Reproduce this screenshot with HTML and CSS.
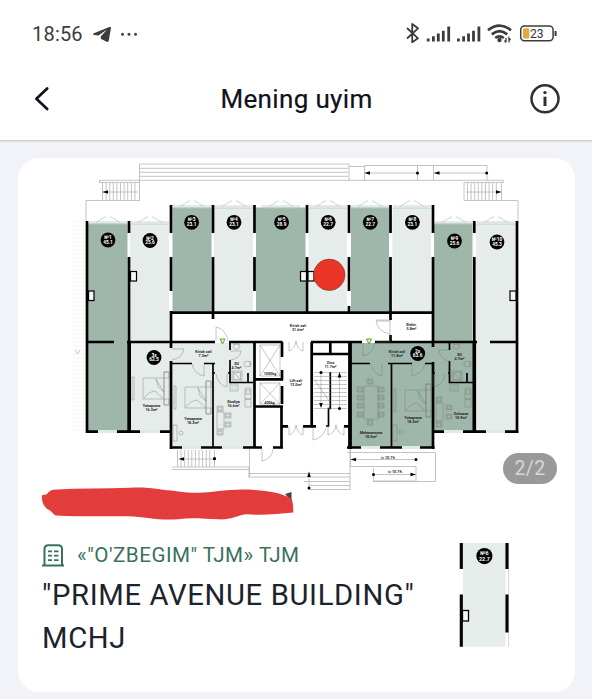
FILE: index.html
```html
<!DOCTYPE html>
<html lang="uz">
<head>
    <meta charset="UTF-8">
    <meta name="viewport" content="width=device-width, initial-scale=1.0">
    <title>Mening uyim</title>
    <link rel="stylesheet" href="styles.css">
</head>
<body>
    <header class="top">
        <div class="status-bar">
            <span class="time">18:56</span>
            <svg class="telegram" width="20" height="18" viewBox="92 25 20 18"><path d="M93.3 33.4Q92.6 34.5 94 35L98.4 35.5L107 29.6L100.8 36.6V38.8L106.6 41.8Q108.4 42.4 108.8 40.6L110.9 28.2Q111 26.4 109.3 27Z" fill="#3c3c3c"/></svg>
            <svg class="dots" width="18" height="6" viewBox="120 30 18 6" fill="#444"><circle cx="122.5" cy="33.2" r="1.5"/><circle cx="129" cy="33.2" r="1.5"/><circle cx="135.5" cy="33.2" r="1.5"/></svg>
            <!-- bluetooth, two sims, wifi, battery -->
            <svg class="system" width="156" height="28" viewBox="402 20 156 28">
                <path d="M407 28L418 38.3L412.2 42.2V24L418 28.3L407 38.5" fill="none" stroke="#3c3c3c" stroke-width="1.8" stroke-linejoin="round"/>
                <path id="sim" d="M428.2 38.5V41.5M433.4 36.3V41.5M438.3 33.5V41.5M443.3 30.8V41.5M448.7 26.5V41.5" stroke="#3c3c3c" stroke-width="2.8"/>
                <use href="#sim" x="30.2"/>
                <g fill="none" stroke="#3c3c3c" stroke-width="2.7">
                    <path d="M488 30.2Q499.5 21 511 30.2M491.8 34.4Q499.5 28 507.2 34.4M495.2 38Q499.5 34.7 503.8 38"/>
                </g>
                <circle cx="499.5" cy="40" r="2.2" fill="#3c3c3c"/>
                <path d="M506 38V42M504.5 40.5L506 42.5M509 42.5V38L510.5 40" fill="none" stroke="#3c3c3c" stroke-width="1.3"/>
                <rect x="520.7" y="26" width="32.4" height="14.8" rx="3.8" fill="#fff" stroke="#3c3c3c" stroke-width="1.5"/>
                <rect x="523" y="28.3" width="6.3" height="10.3" rx="1.4" fill="#e1a944"/>
                <path d="M555.6 31V36" stroke="#3c3c3c" stroke-width="2"/>
                <text x="530" y="38.3" class="charge">23</text>
            </svg>
        </div>
        <div class="nav">
            <svg class="back" width="20" height="28" viewBox="32 85 20 28"><path d="M47.2 88.5L36.4 98.8L47.2 109" fill="none" stroke="#0e121c" stroke-width="2.7" stroke-linecap="round" stroke-linejoin="round"/></svg>
            <h1>Mening uyim</h1>
            <svg class="info" width="32" height="32" viewBox="529 83 32 32"><circle cx="545" cy="98.8" r="13.5" fill="none" stroke="#303030" stroke-width="2.5"/><path d="M545 96.7V106" stroke="#303030" stroke-width="3"/><circle cx="545" cy="92.6" r="1.7" fill="#303030"/></svg>
        </div>
    </header>

    <main class="card">
        <div class="plan">
            <svg class="plan-svg" width="557" height="328" viewBox="18 158 557 328">
                <defs>
                    <path id="gable" d="M-12 0.5L-3 -5L-2 -5M12 0.5L3 -5L2 -5M-19 0H19M-19 2H19"/>
                    <g id="bed"><path d="M0 0H21V21H0ZM21 -6H26V27H21ZM21 -6H26V0H21ZM21 21H26V27H21ZM13 1L21 14M13 1L15 9L21 14M1 20Q5 14 12 13Q15 16 20 20M-11 -1H-9V22H-11Z"/></g>
                    <g id="chair"><path d="M0 0H6V5H0ZM1.2 1.2H4.8V4H1.2Z"/></g>
                    <g id="kitchen"><path d="M0 0H8V7H0ZM15 4H21V15H15ZM16 6H20V10H16ZM15 15H21V23H15Z"/><path d="M1.5 2H3.5M4.5 2H6.5M1.5 5H3.5M4.5 5H6.5"/></g>
                    <g id="bath"><ellipse cx="6.5" cy="3.5" rx="3.2" ry="2.8"/><path d="M3 1H10M2 28H12V38H2ZM3.5 29.5H10.5V36.5H3.5ZM3.5 29.5L10.5 36.5"/><ellipse cx="17.5" cy="21" rx="3.8" ry="2.8"/><path d="M20 18V24"/></g>
                </defs>

                <!-- terrace and outside stairs -->
                <g class="outline">
                    <path d="M139.5 200.5V164H349V181M139.5 168.3H348M139.5 172.3H348M139.5 176.3H348M139.5 180.3H364.5"/>
                    <path d="M99.5 180.3H139.5M99.5 182.5H139.5M99.5 180V183M102.5 183V200M106.1 183V200M109.7 183V200M113.3 183V200M116.9 183V200M120.5 183V200M124.1 183V200M127.7 183V200M131.3 183V200M134.9 183V200M102 192H138M86 221V200.5H140"/>
                    <path d="M349 166.5H364.5M364.5 181V165.5H487V180M364.5 173H417M417.5 165V180M433.5 165V180M434 173H487M364.5 180.3H503.5V182.5H464V200.5H518V221M467.5 183V200M471.1 183V200M474.7 183V200M478.3 183V200M481.9 183V200M485.5 183V200M489.1 183V200M492.7 183V200M496.3 183V200M501.5 183V200M466 192H500"/>
                    <path d="M172 467H249V478M177.5 450V467M181 450V467M184.6 450V467M188.2 450V467M191.8 450V467M195.4 450V467M199 450V467M202.6 450V467M206.2 450V467M209.8 450V467M214.5 450V467M182 459H214M172 469.5H249"/>
                    <path d="M249.5 449V477H350M249.5 473.5H350M350 449V490M304 481.5H350M309 485.5H350M309 489.5H350M309 473V489"/>
                    <path d="M347 452.5H435.5V481.5H373.5V468M350 466.5H416V481M373.5 481H416M350 459.5H416M373.5 474.5H416M350.5 450V467"/>
                </g>
                <path class="hatch" d="M74 221V433M77 221V433M80 221V433M83 221V433"/>
                <path class="outline" d="M75 350L77.5 354L80 350"/>

                <!-- units -->
                <g class="sage">
                    <path d="M88 223.5H127.5V431H88ZM172.5 207.5H211.5V311.5H172.5ZM256 207.5H305.5V311.5H256ZM351 207.5H389V311.5H351ZM434 223.5H472.5V431H434ZM351 343H434V447H351ZM449 343H474V431H449ZM434 343H450V431H434Z"/>
                </g>
                <g class="pale">
                    <path d="M130 223.5H169V341H130ZM214 207.5H253V311.5H214ZM308.5 207.5H347V311.5H308.5ZM392.5 207.5H431V311.5H392.5ZM476 223.5H515.5V431H476ZM130 343H171V431H130ZM171 343H254V447H171Z"/>
                </g>
                <path d="M98 431.5H117M140 431.5H160M182 447.5H201M222 447.5H243M361 447.5H380M402 447.5H420M444 431.5H463M486 431.5H505" stroke="#dcebea" stroke-width="3"/>

                <g class="gable">
                    <use href="#gable" x="108" y="222"/><use href="#gable" x="150" y="222"/>
                    <use href="#gable" x="192" y="206"/><use href="#gable" x="234" y="206"/>
                    <use href="#gable" x="281" y="206"/><use href="#gable" x="328" y="206"/>
                    <use href="#gable" x="370" y="206"/><use href="#gable" x="412" y="206"/>
                    <use href="#gable" x="454" y="222"/><use href="#gable" x="496" y="222"/>
                </g>

                <!-- walls -->
                <g class="wall">
                    <path d="M87 221V433M129 221V233M129 257V433M171 205V233M171 257V291M171 311V348M171 361V449M213 205V233M213 257V319M254.5 205V233M254.5 257V291M307 205V233M307 257V312M349 205V233M349 257V291M349 306V312M390.5 205V233M390.5 257V320M390.5 335V342M433 205V233M433 257V347M433 362V449M474.3 221V233M474.3 257V433M517 221V433"/>
                    <path d="M170 312.7H433M87 342H114M127 342H215M229 342H282.5M311 342H362M375 342H477M490 342H518"/>
                    <path d="M86 431.7H98M117 431.7H140M160 431.7H171M170 447.5H182M201 447.5H222M243 447.5H262M273 447.5H283M347 447.5H361M380 447.5H402M420 447.5H434.5M433 431.7H444M463 431.7H486M505 431.7H518.3"/>
                    <path d="M254.5 342V448M282 342V357M282 370V380M282 386V404M255 379.3H283M255 406.5H283M281.5 406V448M281 426.3H288M303 426.3H316M311.7 342V426M312 354H349M330.3 342V354M344 426.3H350"/>
                    <path d="M350 342V449" stroke-width="3.8"/>
                    <path d="M129.2 342V432M474.3 342V432" stroke-width="3.6"/>
                </g>
                <g class="thin-wall">
                    <path d="M171 363.5H192M204 363.5H215M213 363V447M230 342V350M230 360V382.5H254M248 373V382M351 363.5H370M388 363.5H412M425 363.5H433M391.5 363V447M449.5 342V350M449.5 361V382.5H473M467 373V382M330.3 372V408.5H328.5V426H326"/>
                    <path d="M213 373H215M228 373H230M433 373H435M448 373H450"/>
                </g>
                <g class="shaft">
                    <rect x="88.5" y="291" width="5.5" height="9.5"/><rect x="130.5" y="271.5" width="6" height="9.5"/>
                    <rect x="300.5" y="271.5" width="6" height="9.5"/><rect x="308" y="271.5" width="6" height="9.5"/>
                    <rect x="510" y="291" width="6" height="9.5"/>
                </g>

                <!-- furniture -->
                <g class="furniture">
                    <use href="#bed" x="143" y="378"/><use href="#bed" x="185" y="387"/><use href="#bed" x="405" y="390"/>
                    <use href="#kitchen" x="230" y="384"/><use href="#kitchen" x="450" y="384"/>
                    <use href="#bath" x="230" y="343"/><use href="#bath" x="450" y="343"/>
                    <use href="#chair" x="217" y="406"/><use href="#chair" x="225" y="413"/><use href="#chair" x="225" y="422"/><use href="#chair" x="217" y="430"/>
                    <use href="#chair" x="436" y="397"/><use href="#chair" x="446" y="405"/><use href="#chair" x="446" y="414"/><use href="#chair" x="436" y="422"/>
                    <path d="M217 412H224V429H217ZM436 403H443V421H436ZM173 425H177V441H173Z"/><circle cx="181" cy="433" r="2"/>
                    <path d="M364 386H378V419H364ZM393 425H397V441H393Z"/><circle cx="401" cy="432" r="2"/>
                    <use href="#chair" x="367" y="379"/><use href="#chair" x="367" y="420"/>
                    <use href="#chair" x="357" y="387"/><use href="#chair" x="357" y="395"/><use href="#chair" x="357" y="403"/><use href="#chair" x="357" y="412"/>
                    <use href="#chair" x="378" y="387"/><use href="#chair" x="378" y="395"/><use href="#chair" x="378" y="403"/><use href="#chair" x="378" y="412"/>
                    <path d="M204 364V376Q194 374 192 364M412 364V376Q422 374 425 364M382 364V376Q373 374 371 364M172 349H184Q182 358 172 360M227 374V387Q218 385 216 374M230 351H241Q240 359 230 360M433 374V387M445 374Q444 385 434 387M449 350H439Q440 359 449 361"/>
                    <path d="M216 341V327Q226 329 228 341M363 343V356Q373 354 375 343M390 321H376Q378 332 390 334M262 449V461Q272 459 273 449M313 428V440Q323 438 326 428"/>
                    <path d="M289 342V351Q295 349 296 341Q297 349 303 351V342M289 426V435Q295 433 296 425Q297 433 303 435V426M328 426V435Q335 433 336 425Q337 433 344 435V426"/>
                    <path d="M260 345H280V376H260ZM260 345L280 376M280 345L260 376M260 383H280V404H260ZM260 383L280 404M280 383L260 404"/>
                    <path d="M314 372.5H347M314 376.5H347M314 380.5H347M314 384.5H347M314 388.5H347M314 392.5H347M314 396.5H347M314 400.5H347M314 404.5H347M314 408.5H347M314 379L329 401M321 373V406M339.5 374V408M376 320H390V342H376"/>
                </g>

                <!-- direction arrows -->
                <g class="arrows">
                    <path d="M102.5 192L108 190.2V193.8ZM364.5 173L370 171.2V174.8ZM434 173L439.5 171.2V174.8ZM501.5 192L496 190.2V193.8ZM178.5 459L184 457.2V460.8ZM350.5 459.5L356 457.7V461.3ZM416 474.5L410.5 472.7V476.3ZM309 471.5L307.2 477H310.8ZM321 408L319.2 403H322.8ZM339.5 372L337.7 377.5H341.3Z"/>
                    <circle cx="417.5" cy="173" r="1.5"/><circle cx="486.7" cy="173" r="1.5"/><circle cx="214.5" cy="458.7" r="1.6"/><circle cx="416" cy="459.5" r="1.5"/><circle cx="373.5" cy="474.5" r="1.5"/><circle cx="309" cy="488" r="1.5"/><circle cx="321" cy="372.5" r="1.5"/><circle cx="339.5" cy="408.5" r="1.5"/>
                </g>
                <path d="M220 339H225L222.5 344ZM366.5 339H371.5L369 344Z" fill="#eef5a0" stroke="#5fa43a" stroke-width="1"/>

                <!-- room names -->
                <g class="rooms">
                    <text x="298" y="326.5">Kirish zali</text><text x="298" y="330.8">31.6m²</text>
                    <text x="411.5" y="326">Elektr.</text><text x="411.5" y="330.3">5.8m²</text>
                    <text x="203.5" y="352.5">Kirish zali</text><text x="203.5" y="356.8">7.3m²</text>
                    <text x="397" y="352.5">Kirish zali</text><text x="397" y="356.8">11.8m²</text>
                    <text x="236.5" y="364.5">SU</text><text x="236.5" y="368.5">4.7m²</text>
                    <text x="459.5" y="356">SU</text><text x="459.5" y="360">4.7m²</text>
                    <text x="151.5" y="407">Yotoqxona</text><text x="151.5" y="411.3">16.3m²</text>
                    <text x="193" y="419.5">Yotoqxona</text><text x="193" y="423.8">18.2m²</text>
                    <text x="233.5" y="403">Studiya</text><text x="233.5" y="407.3">16.6m²</text>
                    <text x="296" y="382">Lift zali</text><text x="296" y="386.3">13.0m²</text>
                    <text x="330.5" y="364">Zina</text><text x="330.5" y="368.3">11.7m²</text>
                    <text x="270" y="375.3">1000kg</text><text x="269.5" y="404">400kg</text>
                    <text x="371" y="434">Mehmonxona</text><text x="371" y="438.3">18.0m²</text>
                    <text x="413" y="418.5">Yotoqxona</text><text x="413" y="422.8">18.2m²</text>
                    <text x="461" y="414.5">Oshxona</text><text x="461" y="418.8">10.9m²</text>
                    <text x="388" y="458.5">i= 10.1%</text><text x="395" y="473.3">i= 10.1%</text>
                </g>

                <!-- unit badges -->
                <g class="badges">
                    <circle cx="108" cy="240" r="7.4"/><text x="108" y="239">№1</text><text x="108" y="243.8">45.1</text>
                    <circle cx="150" cy="240.5" r="7.4"/><text x="150" y="239.5">№2</text><text x="150" y="244.3">25.6</text>
                    <circle cx="191.6" cy="222.3" r="7.4"/><text x="191.6" y="221.3">№3</text><text x="191.6" y="226.1">23.1</text>
                    <circle cx="234" cy="222.3" r="7.4"/><text x="234" y="221.3">№4</text><text x="234" y="226.1">23.1</text>
                    <circle cx="281.6" cy="222.3" r="7.4"/><text x="281.6" y="221.3">№5</text><text x="281.6" y="226.1">28.9</text>
                    <circle cx="328.2" cy="222.3" r="7.4"/><text x="328.2" y="221.3">№6</text><text x="328.2" y="226.1">22.7</text>
                    <circle cx="370.3" cy="222.3" r="7.4"/><text x="370.3" y="221.3">№7</text><text x="370.3" y="226.1">22.7</text>
                    <circle cx="412.4" cy="222.3" r="7.4"/><text x="412.4" y="221.3">№8</text><text x="412.4" y="226.1">23.1</text>
                    <circle cx="454.5" cy="241" r="7.4"/><text x="454.5" y="240">№9</text><text x="454.5" y="244.8">25.6</text>
                    <circle cx="497" cy="242" r="7.4"/><text x="497" y="241">№10</text><text x="497" y="245.8">45.3</text>
                    <circle cx="154" cy="357.5" r="7.4"/><text x="154" y="356.5">3x</text><text x="154" y="361.3">62.5</text>
                    <circle cx="417.7" cy="353.5" r="7.4"/><text x="417.7" y="352.5">2x</text><text x="417.7" y="357.3">63.6</text>
                </g>
                <circle cx="329.3" cy="274.8" r="15.7" fill="#ea3527" stroke="#7a4035" stroke-width=".7"/>
            </svg>
            <span class="counter">2/2</span>
        </div>

        <svg class="marker" width="256" height="36" viewBox="40 486 256 36">
            <path d="M285 494L291.5 492V501Z" fill="#444"/>
            <path d="M42 495.3L47 494.2Q48.5 490.8 53 489.7C80 488.2 105 488.8 130 487.8C150 486.5 158 490 171 490.4C186 492.8 198 493.4 211 492C225 490.4 239 488.7 255 490C269 491 281 492.8 291 498.5Q293.5 501 293.2 512.5C278 514 262 515.6 246 514.2C237 515.5 230 520.2 218 519.3C205 519 192 517.4 178 519.2C159 521 145 516.5 129 516.2C105 516.2 82 516.9 56 515.4C53 515 53 511.7 48 509.5C44 506 41.5 503 42 495.3Z" fill="#e23c3b"/>
        </svg>

        <div class="details">
            <div class="names">
                <div class="complex">
                    <svg width="24" height="26" viewBox="41 542 24 26" fill="none" stroke="#39715b" stroke-width="2"><path d="M42 565.6H64M44.5 565V549Q44.5 545.3 48.2 545.3H58.3Q62 545.3 62 549V565"/><path d="M48 551.3H52M54 551.3H58.5M48 555.7H52M54 555.7H58.5M48 560.2H52M54 560.2H58.5" stroke-width="1.8"/></svg>
                    <span>«"O'ZBEGIM" TJM» TJM</span>
                </div>
                <h2>"PRIME AVENUE BUILDING"<br>MCHJ</h2>
            </div>
            <svg class="thumb" width="54" height="106" viewBox="458 542 54 106">
                <path d="M462 543H505.5V646.7H462Z" fill="#e6ecea"/>
                <path d="M508.6 543V646.7" stroke="#c4c8c6" stroke-width=".8"/>
                <path d="M461.3 569V594.5" stroke="#fff" stroke-width="3.1"/>
                <path d="M461.3 543V569M461.3 594.5V646.7M507 543V569M507 594.5V632.5" stroke="#000" stroke-width="3.1"/>
                <rect x="462.5" y="610.5" width="6" height="10.5" fill="#f4f7f6" stroke="#000" stroke-width="1.3"/>
                <g class="badges thumb-badge"><circle cx="484.4" cy="556.1" r="8.1"/><text x="484.4" y="555">№6</text><text x="484.4" y="560.6">22.7</text></g>
            </svg>
        </div>
    </main>
</body>
</html>
```
FILE: styles.css
```css
* {
    box-sizing: border-box;
}

body {
    margin: 0;
    height: 699px;
    overflow: hidden;
    background-color: #f2f3f8;
    font-family: Roboto, sans-serif;
    color: #1c232c;
}

.top {
    height: 140px;
    background-color: #fff;
    box-shadow: 0 1px 2px rgba(0, 0, 0, 0.22);
}

.status-bar {
    display: flex;
    align-items: center;
    height: 68px;
    padding: 0 34px 0 32px;
}

.time {
    width: 60px;
    font-size: 20px;
    letter-spacing: 0.2px;
    color: #3c3c3c;
    white-space: nowrap;
}

.dots {
    margin: 0 0 1px 8px;
}

.system {
    margin-left: auto;
}

.charge {
    font-size: 12px;
    fill: #333;
}

.nav {
    display: flex;
    align-items: center;
    justify-content: space-between;
    height: 62px;
    padding: 0 31px 0 32px;
}

.back {
    margin-right: 12px;
}

h1 {
    margin: 0;
    font-size: 26px;
    font-weight: 400;
    letter-spacing: 0.35px;
    color: #0e121c;
    -webkit-text-stroke: 0.2px #0e121c;
}

.card {
    margin: 18px 17px 0 18px;
    height: 534px;
    border-radius: 21px;
    background-color: #fff;
}

.plan {
    position: relative;
    height: 328px;
}

.plan-svg {
    display: block;
    overflow: visible;
}

.outline {
    fill: none;
    stroke: #b5b5b5;
    stroke-width: 0.8;
}

.hatch {
    stroke: #eee;
    stroke-width: 0.8;
    stroke-dasharray: 2 2;
}

.sage {
    fill: #9fb6aa;
}

.pale {
    fill: #e6ecea;
}

.gable {
    fill: none;
    stroke: #b9c9c2;
    stroke-width: 0.8;
}

.wall {
    stroke: #000;
    stroke-width: 2.7;
}

.thin-wall {
    fill: none;
    stroke: #000;
    stroke-width: 1.7;
}

.shaft {
    fill: #f4f7f6;
    stroke: #000;
    stroke-width: 1.2;
}

.furniture {
    fill: none;
    stroke: #6e7a75;
    stroke-opacity: 0.7;
    stroke-width: 0.6;
}

.rooms {
    font-size: 3.7px;
    font-weight: 700;
    text-anchor: middle;
    fill: #222;
}

.badges text {
    font-size: 4.8px;
    font-weight: 700;
    text-anchor: middle;
    fill: #fff;
}

.badges.thumb-badge text {
    font-size: 5.3px;
}

.counter {
    position: absolute;
    right: 18px;
    bottom: 2px;
    width: 54px;
    height: 31px;
    border-radius: 16px;
    background-color: #999;
    color: #d6d6d6;
    font-size: 19.5px;
    line-height: 31px;
    letter-spacing: 0.4px;
    text-align: center;
}

.marker {
    display: block;
    position: relative;
    margin-left: 22px;
}

.details {
    display: flex;
    justify-content: space-between;
    padding: 20px 63px 0 23px;
}

.complex {
    display: flex;
    align-items: center;
    height: 26px;
    font-size: 20.6px;
    color: #39715b;
    white-space: nowrap;
}

.complex span {
    margin-left: 12px;
    letter-spacing: 0.5px;
}

h2 {
    margin: 6px 0 0 1px;
    font-size: 29.2px;
    font-weight: 400;
    line-height: 43px;
    letter-spacing: 0.65px;
    white-space: nowrap;
}
```
